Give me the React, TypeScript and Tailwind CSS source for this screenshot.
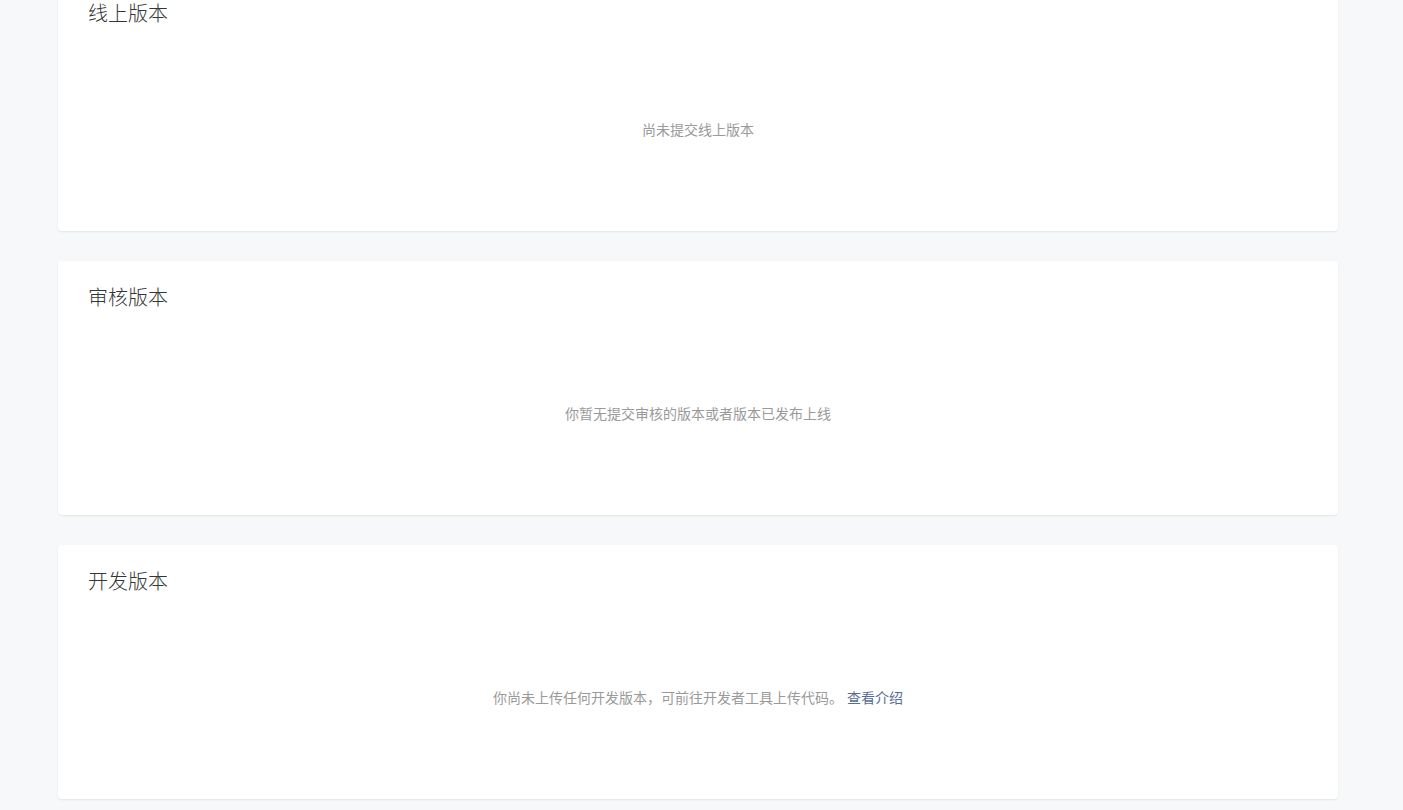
const font = { fontFamily: '"Noto Sans CJK SC", "Noto Sans", sans-serif' };

interface Section {
  title: string;
  empty: string;
  link?: string;
}

const sections: Section[] = [
  { title: '线上版本', empty: '尚未提交线上版本' },
  { title: '审核版本', empty: '你暂无提交审核的版本或者版本已发布上线' },
  { title: '开发版本', empty: '你尚未上传任何开发版本，可前往开发者工具上传代码。', link: '查看介绍' },
];

const App = () => {
  return (
    <div className="h-[810px] overflow-hidden bg-[#f7f8fa]" style={font}>
      <div className="w-[1280px] ml-[58px] -mt-[23px] flex flex-col gap-[30px]">
        {sections.map((s) => (
          <div
            key={s.title}
            className="h-[254px] bg-white rounded-[4px] shadow-[0_1px_2px_rgba(0,0,0,0.08)] px-[30px] pt-[24px]"
          >
            <h3 className="text-[20px] leading-[24px] text-[#353535] font-light">{s.title}</h3>
            <p className="mt-[94px] text-center text-[14px] leading-[20px] text-[#9a9a9a]">
              {s.empty}
              {s.link && <a className="ml-[4px] text-[#576b95] cursor-pointer">{s.link}</a>}
            </p>
          </div>
        ))}
      </div>
    </div>
  );
};

export default App;
